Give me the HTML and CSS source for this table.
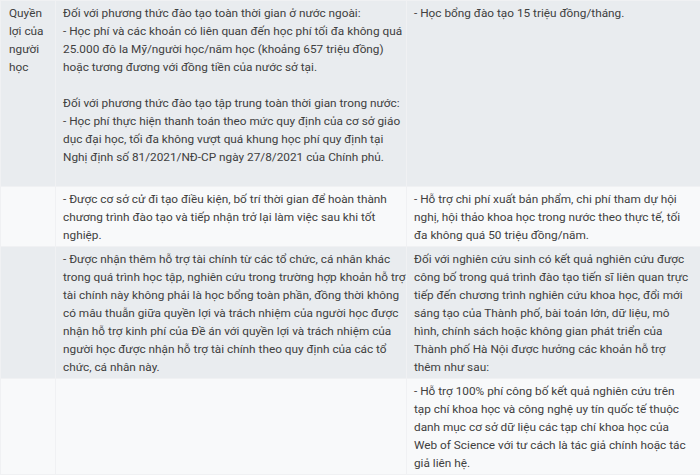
FILE: index.html
```html
<!DOCTYPE html>
<html lang="vi">
<head>
<meta charset="utf-8">
<link rel="stylesheet" href="styles.css">
</head>
<body>
<table class="grid">
  <colgroup>
    <col class="c1">
    <col class="c2">
    <col class="c3">
  </colgroup>
  <tbody>
    <tr class="alt">
      <td class="first">Quyền lợi của người học</td>
      <td class="mid">Đối với phương thức đào tạo toàn thời gian ở nước ngoài:<br>- Học phí và các khoản có liên quan đến học phí tối đa không quá 25.000 đô la Mỹ/người học/năm học (khoảng 657 triệu đồng) hoặc tương đương với đồng tiền của nước sở tại.<br><br>Đối với phương thức đào tạo tập trung toàn thời gian trong nước:<br>- Học phí thực hiện thanh toán theo mức quy định của cơ sở giáo dục đại học, tối đa không vượt quá khung học phí quy định tại Nghị định số 81/2021/NĐ-CP ngày 27/8/2021 của Chính phủ.<br>&nbsp;</td>
      <td class="last">- Học bổng đào tạo 15 triệu đồng/tháng.</td>
    </tr>
    <tr>
      <td class="first"></td>
      <td class="mid">- Được cơ sở cử đi tạo điều kiện, bố trí thời gian để hoàn thành chương trình đào tạo và tiếp nhận trở lại làm việc sau khi tốt nghiệp.</td>
      <td class="last">- Hỗ trợ chi phí xuất bản phẩm, chi phí tham dự hội nghị, hội thảo khoa học trong nước theo thực tế, tối đa không quá 50 triệu đồng/năm.</td>
    </tr>
    <tr class="alt">
      <td class="first"></td>
      <td class="mid">- Được nhận thêm hỗ trợ tài chính từ các tổ chức, cá nhân khác trong quá trình học tập, nghiên cứu trong trường hợp khoản hỗ trợ tài chính này không phải là học bổng toàn phần, đồng thời không có mâu thuẫn giữa quyền lợi và trách nhiệm của người học được nhận hỗ trợ kinh phí của Đề án với quyền lợi và trách nhiệm của người học được nhận hỗ trợ tài chính theo quy định của các tổ chức, cá nhân này.</td>
      <td class="last">Đối với nghiên cứu sinh có kết quả nghiên cứu được công bố trong quá trình đào tạo tiến sĩ liên quan trực tiếp đến chương trình nghiên cứu khoa học, đổi mới sáng tạo của Thành phố, bài toán lớn, dữ liệu, mô hình, chính sách hoặc không gian phát triển của Thành phố Hà Nội được hưởng các khoản hỗ trợ thêm như sau:</td>
    </tr>
    <tr>
      <td class="first"></td>
      <td class="mid"></td>
      <td class="last">- Hỗ trợ 100% phí công bố kết quả nghiên cứu trên tạp chí khoa học và công nghệ uy tín quốc tế thuộc danh mục cơ sở dữ liệu các tạp chí khoa học của Web of Science với tư cách là tác giả chính hoặc tác giả liên hệ.</td>
    </tr>
  </tbody>
</table>
</body>
</html>
```

FILE: styles.css
```css
html, body {
  margin: 0;
  padding: 0;
  background: #f8f9fa;
}
body {
  font-family: Roboto, "Noto Sans", sans-serif;
  font-size: 11.8px;
  color: #404040;
  overflow: hidden;
}
.grid {
  border-collapse: collapse;
  width: 700px;
  table-layout: fixed;
}
.c1 { width: 55px; }
.c2 { width: 351px; }
.c3 { width: 294px; }
.grid td {
  vertical-align: top;
  padding: 3px 2px 2px 7px;
  line-height: 18px;
  border: 1px solid #f0f1f3;
  background: #f8f9fa;
}
.grid tr.alt td {
  background: #e9ecef;
}
.grid td.first {
  padding-left: 8px;
}
.grid td.mid {
  padding-right: 0;
}
.grid td.last {
  padding-right: 11px;
}
```
